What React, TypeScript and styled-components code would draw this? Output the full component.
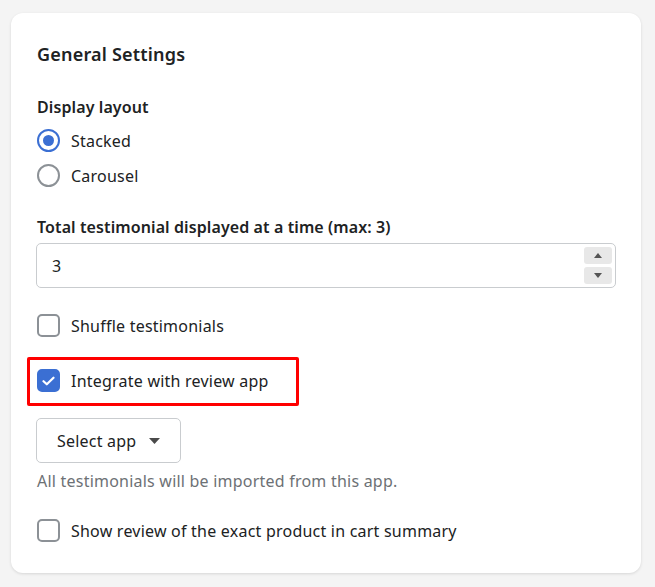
import { createGlobalStyle } from 'styled-components';
import styled from 'styled-components';

const GlobalStyle = createGlobalStyle`
  html, body {
    margin: 0;
    padding: 0;
    background: #f4f4f4;
  }
  body {
    font-family: "Noto Sans", "Open Sans", sans-serif;
    color: #202223;
  }
`;

const BLUE = '#3b6fd3';

export default function App() {
  return (
    <>
      <GlobalStyle />
      <Page>
        <Card>
          <Title>General Settings</Title>

          <FieldLabel $top={29}>Display layout</FieldLabel>
          <RadioGroup>
            <OptionRow>
              <Radio $checked />
              <OptionText>Stacked</OptionText>
            </OptionRow>
            <OptionRow>
              <Radio />
              <OptionText>Carousel</OptionText>
            </OptionRow>
          </RadioGroup>

          <FieldLabel $top={22}>Total testimonial displayed at a time (max: 3)</FieldLabel>
          <NumberField>
            <NumberValue>3</NumberValue>
            <Spinner>
              <SpinButton>
                <svg width="8" height="5" viewBox="0 0 8 5"><path d="M4 0L8 5H0z" fill="#555" /></svg>
              </SpinButton>
              <SpinButton>
                <svg width="8" height="5" viewBox="0 0 8 5"><path d="M0 0H8L4 5z" fill="#555" /></svg>
              </SpinButton>
            </Spinner>
          </NumberField>

          <OptionRow $top={20}>
            <Checkbox />
            <OptionText>Shuffle testimonials</OptionText>
          </OptionRow>

          <Highlight>
            <OptionRow>
              <Checkbox $checked>
                <svg width="13" height="10" viewBox="0 0 13 10">
                  <path d="M1.5 5.2L4.8 8.3L11.5 1.7" fill="none" stroke="#fff" strokeWidth="2.2" strokeLinecap="round" strokeLinejoin="round" />
                </svg>
              </Checkbox>
              <OptionText>Integrate with review app</OptionText>
            </OptionRow>
          </Highlight>

          <SelectButton>
            Select app
            <svg width="11" height="6" viewBox="0 0 11 6"><path d="M0 0H11L5.5 6z" fill="#4a4a4a" /></svg>
          </SelectButton>
          <HelpText>All testimonials will be imported from this app.</HelpText>

          <OptionRow $top={20}>
            <Checkbox />
            <OptionText>Show review of the exact product in cart summary</OptionText>
          </OptionRow>
        </Card>
      </Page>
    </>
  );
}

const Page = styled.div`
  padding: 13px 14px 14px 11px;
`;

const Card = styled.div`
  display: flex;
  flex-direction: column;
  align-items: flex-start;
  background: #fff;
  border-radius: 12px;
  box-shadow: 0 1px 3px rgba(0, 0, 0, 0.12);
  padding: 29px 25px 25px 26px;
`;

const Title = styled.h2`
  margin: 0;
  font-size: 18px;
  line-height: 24px;
  font-weight: 600;
  letter-spacing: 0.2px;
`;

const FieldLabel = styled.div<{ $top: number }>`
  margin-top: ${(p) => p.$top}px;
  font-size: 16px;
  line-height: 24px;
  font-weight: 600;
  letter-spacing: 0.1px;
`;

const RadioGroup = styled.div`
  display: flex;
  flex-direction: column;
  margin-top: 4px;
`;

const OptionRow = styled.label<{ $top?: number }>`
  display: flex;
  align-items: center;
  gap: 11px;
  height: 35px;
  margin-top: ${(p) => p.$top ?? 0}px;
`;

const OptionText = styled.span`
  font-size: 16px;
  line-height: 24px;
  letter-spacing: 0.22px;
`;

const Radio = styled.span<{ $checked?: boolean }>`
  box-sizing: border-box;
  width: 23px;
  height: 23px;
  border-radius: 50%;
  border: 2px solid ${(p) => (p.$checked ? BLUE : '#8c9196')};
  display: flex;
  align-items: center;
  justify-content: center;

  &::after {
    content: '';
    display: ${(p) => (p.$checked ? 'block' : 'none')};
    width: 11px;
    height: 11px;
    border-radius: 50%;
    background: ${BLUE};
  }
`;

const Checkbox = styled.span<{ $checked?: boolean }>`
  box-sizing: border-box;
  width: 23px;
  height: 23px;
  border-radius: 5px;
  border: 2px solid ${(p) => (p.$checked ? BLUE : '#8c9196')};
  background: ${(p) => (p.$checked ? BLUE : '#fff')};
  display: flex;
  align-items: center;
  justify-content: center;
`;

const NumberField = styled.div`
  box-sizing: border-box;
  margin-top: 4px;
  align-self: stretch;
  margin-left: -1px;
  height: 45px;
  border: 1px solid #c9cccf;
  border-radius: 5px;
  display: flex;
  align-items: center;
  justify-content: space-between;
  padding: 0 3px 0 15px;
`;

const NumberValue = styled.span`
  font-size: 16px;
  line-height: 24px;
`;

const Spinner = styled.div`
  display: flex;
  flex-direction: column;
  gap: 3px;
`;

const SpinButton = styled.span`
  width: 28px;
  height: 17px;
  border-radius: 3px;
  background: #e8e8e8;
  display: flex;
  align-items: center;
  justify-content: center;
`;

const Highlight = styled.div`
  box-sizing: border-box;
  margin: 14px 0 0 -10px;
  width: 272px;
  height: 49px;
  border: 3px solid #ff0000;
  border-radius: 2px;
  padding: 3px 0 0 7px;
`;

const SelectButton = styled.button`
  box-sizing: border-box;
  margin: 12px 0 0 -1px;
  width: 145px;
  height: 45px;
  display: flex;
  align-items: center;
  gap: 13px;
  padding: 0 0 0 20px;
  background: #fff;
  border: 1px solid #c9cccf;
  border-radius: 5px;
  font-family: inherit;
  font-size: 16px;
  letter-spacing: 0.22px;
  color: #202223;
`;

const HelpText = styled.p`
  margin: 6px 0 0;
  font-size: 16px;
  line-height: 24px;
  letter-spacing: 0.22px;
  color: #6d7175;
`;
